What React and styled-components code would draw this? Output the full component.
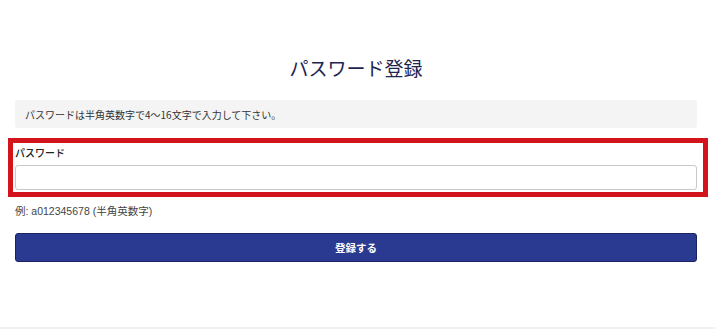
import React from "react";
import styled, { createGlobalStyle } from "styled-components";

const GlobalStyle = createGlobalStyle`
  html, body {
    margin: 0;
    padding: 0;
    background: #fff;
  }
  body {
    font-family: "Liberation Sans", "Noto Sans CJK JP", sans-serif;
    color: #333;
  }
`;

const App = () => {
  return (
    <>
      <GlobalStyle />
      <Page>
        <Title>パスワード登録</Title>
        <Notice>パスワードは半角英数字で4〜16文字で入力して下さい。</Notice>
        <Highlight>
          <Label>パスワード</Label>
          <Input type="password" />
        </Highlight>
        <Hint>例: a012345678 (半角英数字)</Hint>
        <SubmitButton>登録する</SubmitButton>
      </Page>
      <Footer />
    </>
  );
};

const Page = styled.main`
  display: flex;
  flex-direction: column;
  height: 327px;
  box-sizing: border-box;
  padding: 54px 18px 0 15px;
`;

const Title = styled.h1`
  margin: 0 0 18px;
  text-align: center;
  font-family: "Noto Sans CJK JP", sans-serif;
  font-size: 19px;
  font-weight: 400;
  line-height: 28px;
  color: #1d2550;
`;

const Notice = styled.div`
  height: 28px;
  display: flex;
  align-items: center;
  padding: 0 10px;
  background: #f4f4f4;
  border-radius: 3px;
  font-family: "Noto Sans CJK JP", sans-serif;
  font-size: 10px;
  color: #333;
`;

const Highlight = styled.div`
  display: flex;
  flex-direction: column;
  margin: 10px -11px 0 -7px;
  padding: 2px 6px 2px 2px;
  border: 5px solid #d3141c;
`;

const Label = styled.label`
  font-family: "Noto Sans CJK JP", sans-serif;
  font-size: 10px;
  font-weight: 500;
  line-height: 16px;
  color: #222;
  margin-bottom: 4px;
`;

const Input = styled.input`
  box-sizing: border-box;
  height: 25px;
  width: 100%;
  margin: 0;
  padding: 0 8px;
  border: 1px solid #c8c8c8;
  border-radius: 3px;
  background: #fff;
  outline: none;
`;

const Hint = styled.p`
  margin: 6px 0 0;
  font-family: "Liberation Sans", "Noto Sans CJK JP", sans-serif;
  font-size: 10.5px;
  line-height: 16px;
  color: #444;
`;

const SubmitButton = styled.button`
  margin-top: 14px;
  height: 29px;
  width: 100%;
  border: 1px solid #1b2163;
  border-radius: 3px;
  background: #2a3a90;
  color: #fff;
  font-family: "Noto Sans CJK JP", sans-serif;
  font-size: 10.5px;
  font-weight: 700;
  cursor: pointer;
`;

const Footer = styled.footer`
  height: 2px;
  background: #f0f0f0;
`;

export default App;
